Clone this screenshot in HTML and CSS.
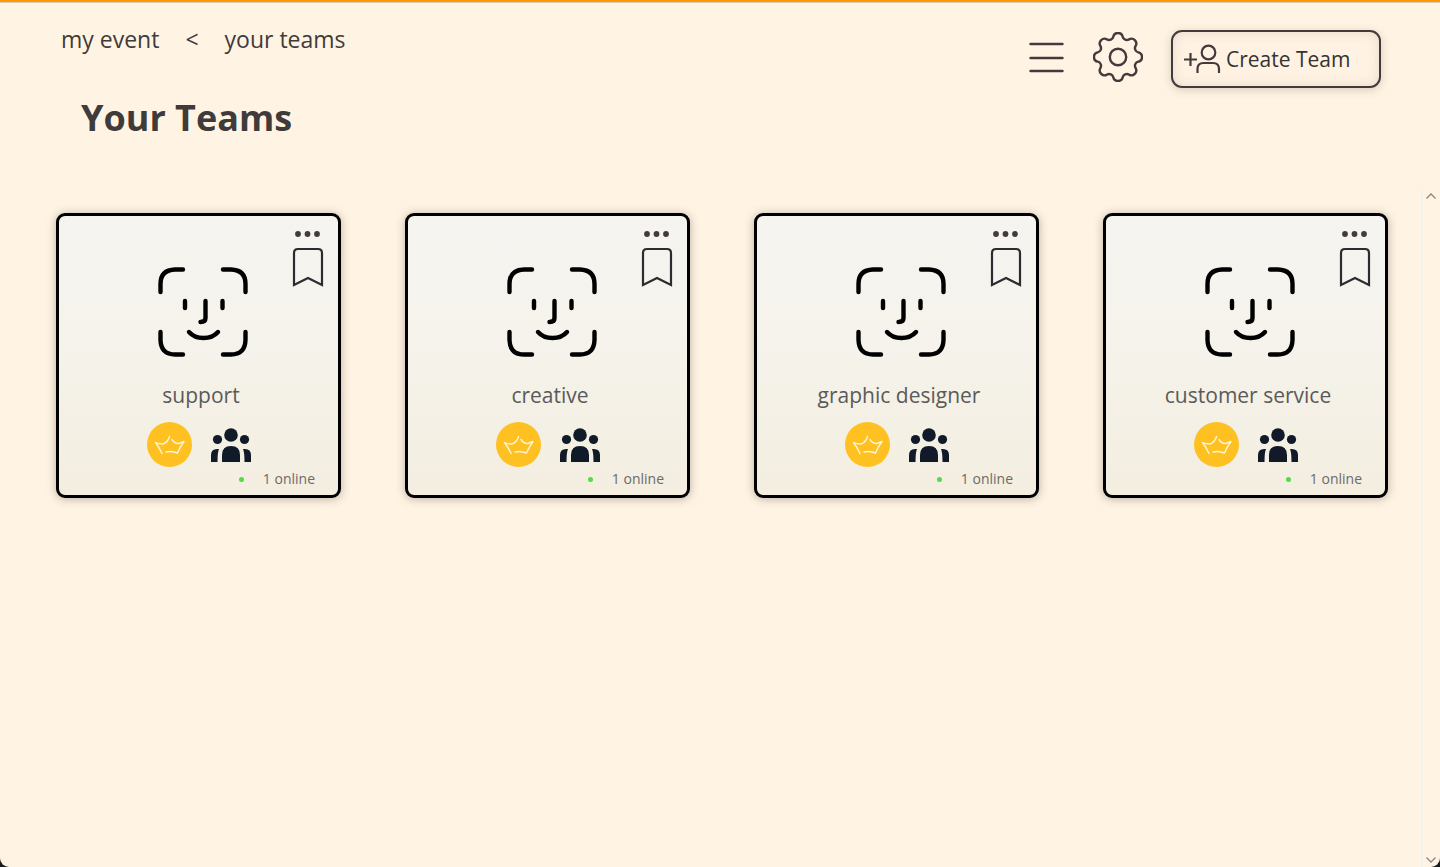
FILE: index.html
```html
<!DOCTYPE html>
<html lang="en">
<head>
<meta charset="utf-8">
<meta name="viewport" content="width=device-width, initial-scale=1">
<title>Your Teams</title>
<link rel="stylesheet" href="styles.css">
</head>
<body>
<svg class="sprite" aria-hidden="true">
  <symbol id="face" viewBox="0 0 90 90">
    <g fill="none" stroke="#000" stroke-width="4.400" stroke-linecap="round" stroke-linejoin="round">
      <path d="M25 2.500H17Q2.500 3 2.500 17V25M65 2.500H73Q87.500 3 87.500 17V25M2.500 65V73Q3 87.500 17 87.500H25M87.500 65V73Q87 87.500 73 87.500H65"/>
      <path d="M27 34V41M64.500 34V41M47.500 34V51Q47.500 55 42.500 55"/>
      <path d="M31 65C38 73 53 73 60 65"/>
    </g>
  </symbol>
  <symbol id="bookmark" viewBox="0 0 32 40">
    <path d="M2 38V6Q2 2 6 2H26Q30 2 30 6V38L16 31Z" fill="none" stroke="#2b2b30" stroke-width="2.200"/>
  </symbol>
  <symbol id="dots" viewBox="0 0 28 8">
    <g fill="#453a3b"><circle cx="4" cy="4" r="2.900"/><circle cx="13.500" cy="4" r="2.900"/><circle cx="23" cy="4" r="2.900"/></g>
  </symbol>
  <symbol id="crown" viewBox="0 0 45 45">
    <circle cx="22.500" cy="22.500" r="22.500" fill="#ffc021"/>
    <path d="M22.500 14.500Q21 20 16 22Q11 22 8.500 20.500Q12 25 15 31.500M25 17.500Q28 22 32 21.500L37 19.500Q33 25 30.500 31Q25 28.500 19 30" fill="none" stroke="#fff5d8" stroke-width="1.400" stroke-linecap="round" stroke-linejoin="round"/>
  </symbol>
  <symbol id="people" viewBox="0 0 40 34">
    <g fill="#111a28">
      <circle cx="20" cy="7" r="6.800"/><circle cx="6.500" cy="11.500" r="4.600"/><circle cx="33.500" cy="11.500" r="4.600"/>
      <path d="M11 34V27Q11 18 20 18T29 27V34ZM0 34V27Q0 20 8 21Q6.500 24 6.500 34ZM40 34V27Q40 20 32 21Q33.500 24 33.500 34Z"/>
    </g>
  </symbol>
</svg>
<div class="page">
  <header class="header">
    <div class="heading">
      <nav class="crumbs" aria-label="Breadcrumb"><a href="#">my event</a><span>&lt;</span><a href="#">your teams</a></nav>
      <h1 class="title">Your Teams</h1>
    </div>
    <div class="tools">
      <button class="icon-button" type="button" aria-label="Menu">
        <svg width="36" height="32" viewBox="0 0 36 32" fill="none" stroke="#453a3b" stroke-width="2.400" stroke-linecap="round"><path d="M1.500 3H33.500M1.500 17H33.500M1.500 30H33.500"/></svg>
      </button>
      <button class="icon-button" type="button" aria-label="Settings">
        <svg width="50" height="50" viewBox="0 0 50 50" fill="none" stroke="#453a3b" stroke-width="2.400"><circle cx="25" cy="25" r="8.200"/><path d="M20.300 4.700A4.830 4.830 0 0 1 29.700 4.700A4.200 4.200 0 0 0 36 7.400A4.830 4.830 0 0 1 42.600 14A4.200 4.200 0 0 0 45.300 20.300A4.830 4.830 0 0 1 45.300 29.700A4.200 4.200 0 0 0 42.600 36A4.830 4.830 0 0 1 36 42.600A4.200 4.200 0 0 0 29.700 45.300A4.830 4.830 0 0 1 20.300 45.300A4.200 4.200 0 0 0 14 42.600A4.830 4.830 0 0 1 7.400 36A4.200 4.200 0 0 0 4.700 29.700A4.830 4.830 0 0 1 4.700 20.300A4.200 4.200 0 0 0 7.400 14A4.830 4.830 0 0 1 14 7.400A4.200 4.200 0 0 0 20.300 4.700Z"/></svg>
      </button>
      <button class="create" type="button">
        <svg width="38" height="30" viewBox="0 0 38 30" fill="none" stroke="#453a3b" stroke-width="2.200"><path d="M1 15.500H14M7.500 9V22M14.500 29V25Q14.500 19 20.500 19H30Q36 19 36 25V29"/><ellipse cx="25.500" cy="8.500" rx="6.800" ry="6.900"/></svg>
        <span>Create Team</span>
      </button>
    </div>
  </header>
  <div class="body">
    <main class="teams">
      <article class="card">
        <div class="card-top">
          <svg class="face"><use href="#face"/></svg>
          <div class="actions">
            <button class="icon-button" type="button" aria-label="More"><svg class="dots"><use href="#dots"/></svg></button>
            <button class="icon-button" type="button" aria-label="Bookmark"><svg class="bookmark"><use href="#bookmark"/></svg></button>
          </div>
        </div>
        <h2 class="name">support</h2>
        <div class="badges"><svg class="crown"><use href="#crown"/></svg><svg class="people"><use href="#people"/></svg></div>
        <p class="online">1 online</p>
      </article>
      <article class="card">
        <div class="card-top">
          <svg class="face"><use href="#face"/></svg>
          <div class="actions">
            <button class="icon-button" type="button" aria-label="More"><svg class="dots"><use href="#dots"/></svg></button>
            <button class="icon-button" type="button" aria-label="Bookmark"><svg class="bookmark"><use href="#bookmark"/></svg></button>
          </div>
        </div>
        <h2 class="name">creative</h2>
        <div class="badges"><svg class="crown"><use href="#crown"/></svg><svg class="people"><use href="#people"/></svg></div>
        <p class="online">1 online</p>
      </article>
      <article class="card">
        <div class="card-top">
          <svg class="face"><use href="#face"/></svg>
          <div class="actions">
            <button class="icon-button" type="button" aria-label="More"><svg class="dots"><use href="#dots"/></svg></button>
            <button class="icon-button" type="button" aria-label="Bookmark"><svg class="bookmark"><use href="#bookmark"/></svg></button>
          </div>
        </div>
        <h2 class="name">graphic designer</h2>
        <div class="badges"><svg class="crown"><use href="#crown"/></svg><svg class="people"><use href="#people"/></svg></div>
        <p class="online">1 online</p>
      </article>
      <article class="card">
        <div class="card-top">
          <svg class="face"><use href="#face"/></svg>
          <div class="actions">
            <button class="icon-button" type="button" aria-label="More"><svg class="dots"><use href="#dots"/></svg></button>
            <button class="icon-button" type="button" aria-label="Bookmark"><svg class="bookmark"><use href="#bookmark"/></svg></button>
          </div>
        </div>
        <h2 class="name">customer service</h2>
        <div class="badges"><svg class="crown"><use href="#crown"/></svg><svg class="people"><use href="#people"/></svg></div>
        <p class="online">1 online</p>
      </article>
    </main>
    <div class="rail">
      <button class="icon-button" type="button" aria-label="Scroll up"><svg width="10" height="6" viewBox="0 0 10 6" fill="none" stroke="#8a8682" stroke-width="1.300"><path d="M.500 5.500L5 1L9.500 5.500"/></svg></button>
      <button class="icon-button" type="button" aria-label="Scroll down"><svg width="10" height="6" viewBox="0 0 10 6" fill="none" stroke="#8a8682" stroke-width="1.300"><path d="M.500 .500L5 5L9.500 .500"/></svg></button>
    </div>
  </div>
</div>
</body>
</html>
```
FILE: styles.css
```css
* { box-sizing: border-box; }
body {
  margin: 0;
  background: #1c1c1c;
  color: #403b3b;
  font-family: "Segoe UI", "Open Sans", "Noto Sans", sans-serif;
}
.sprite { position: absolute; width: 0; height: 0; }
.page {
  min-height: 100vh;
  display: flex;
  flex-direction: column;
  background: #fff4e3;
  border-top: 2px solid #ff9900;
  border-radius: 0 0 9px 9px;
  box-shadow: inset 0 1px 0 #d8cdbd;
}
.header {
  display: flex;
  justify-content: space-between;
  align-items: flex-start;
  padding: 21px 59px 0 61px;
  min-height: 188px;
}
.crumbs { display: flex; gap: 26px; font-size: 23px; line-height: 32px; }
.crumbs a { color: inherit; text-decoration: none; }
.title { margin: 39px 0 0 20px; font-size: 36px; line-height: 48px; font-weight: 700; }
.tools { display: flex; align-items: flex-start; gap: 28px; padding-top: 7px; }
.tools .icon-button { display: flex; align-items: center; height: 54px; }
.icon-button { display: block; padding: 0; border: 0; background: none; }
.icon-button svg { display: block; }
.create {
  display: flex;
  align-items: center;
  gap: 5px;
  width: 210px;
  height: 58px;
  padding: 0 10px;
  border: 2px solid #453a3b;
  border-radius: 11px;
  background: #fff2e3;
  box-shadow: 0 2px 10px rgba(60, 50, 40, .2), inset 0 0 12px rgba(60, 50, 40, .12);
  color: #333;
  font: inherit;
  font-size: 21px;
  white-space: nowrap;
}
.body { flex: 1; display: flex; }
.teams {
  flex: 1;
  display: grid;
  grid-template-columns: repeat(4, 1fr);
  gap: 64px;
  align-items: start;
  padding: 23px 33px 23px 56px;
}
.card {
  display: flex;
  flex-direction: column;
  padding: 0 14px 6px;
  border: 3px solid #000;
  border-radius: 9px;
  background: linear-gradient(#f5f4f0, #f5f3ec 40%, #f3eee0);
  box-shadow: 0 1px 10px rgba(60, 45, 40, .35);
}
.card-top { display: grid; grid-template-columns: 1fr 90px 1fr; padding-left: 9px; }
.face { grid-column: 2; width: 90px; height: 90px; margin-top: 51px; }
.actions { display: flex; flex-direction: column; align-items: flex-end; gap: 9px; padding-top: 14px; }
.dots { width: 28px; height: 8px; margin-right: 2px; }
.bookmark { width: 32px; height: 40px; }
.name {
  margin: 23px 0 12px;
  padding-left: 5px;
  color: #5b5a5a;
  font-size: 21px;
  font-weight: 400;
  line-height: 30px;
  text-align: center;
  white-space: nowrap;
}
.badges { display: flex; justify-content: center; align-items: center; gap: 19px; }
.crown { width: 45px; height: 45px; }
.people { width: 40px; height: 34px; }
.online {
  display: flex;
  justify-content: flex-end;
  align-items: center;
  gap: 19px;
  margin: 2px 9px 0 0;
  color: #6b6a68;
  font-size: 14px;
  line-height: 20px;
}
.online::before { content: ""; width: 5px; height: 5px; border-radius: 50%; background: #4fdc45; }
.rail {
  display: flex;
  flex-direction: column;
  justify-content: space-between;
  align-items: center;
  width: 19px;
  padding: 3px 2px 4px 0;
  border-left: 2px solid #f4f1ee;
}
```
